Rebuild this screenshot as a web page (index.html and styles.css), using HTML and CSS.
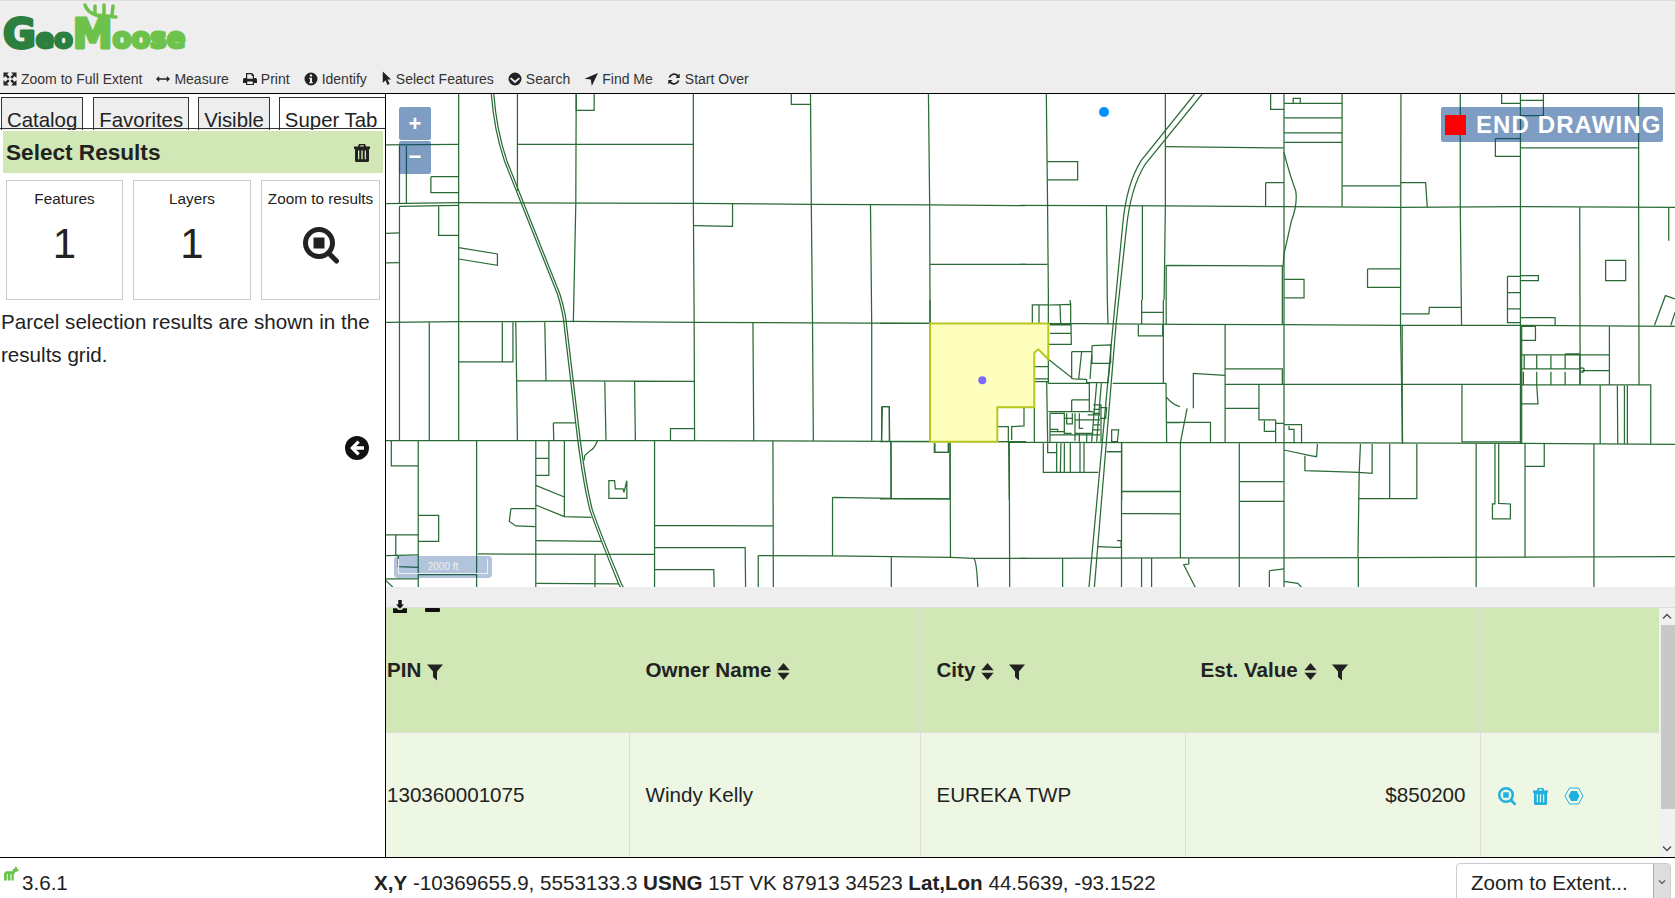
FILE: index.html
```html
<!DOCTYPE html>
<html lang="en">
<head>
<meta charset="utf-8">
<title>GeoMoose</title>
<link rel="stylesheet" href="styles.css">
</head>
<body>
<svg class="defs" width="0" height="0" aria-hidden="true">
  <symbol id="i-full" viewBox="0 0 14 14"><path d="M.5.5h5.4L.5 5.9zM13.5.5v5.4L8.1.5zM.5 13.5V8.1l5.4 5.4zM13.5 13.5H8.1l5.4-5.4z"/><path d="M3 3l2.8 2.8M11 3L8.2 5.8M3 11l2.8-2.8M11 11L8.2 8.2" stroke="currentColor" stroke-width="2.4"/></symbol>
  <symbol id="i-measure" viewBox="0 0 14 14"><path d="M0 7l3.2-3v2.2h7.6V4L14 7l-3.2 3V7.8H3.2V10z"/></symbol>
  <symbol id="i-print" viewBox="0 0 14 14"><path fill-rule="evenodd" d="M3 1h6l2 2v3h1.500A1.500 1.500 0 0 1 14 7.500V11h-3v2H3v-2H0V7.500A1.500 1.500 0 0 1 1.500 6H3zM4.200 2.200v4.500h5.600V4H8.500V2.200zM4.200 9.500v2.400h5.600V9.500z"/></symbol>
  <symbol id="i-info" viewBox="0 0 14 14"><path fill-rule="evenodd" d="M7 .5a6.500 6.500 0 1 1 0 13a6.500 6.500 0 0 1 0-13zM5.900 2.500v2h2.200v-2zM5.200 5.700v1.200h.8v3H5.200v1.300h3.600V9.900H8V5.700z"/></symbol>
  <symbol id="i-pointer" viewBox="0 0 10 16"><path d="M1 .5v12.200l3-2.800 2 5 2.300-1-2.100-4.800h3.800z"/></symbol>
  <symbol id="i-chev" viewBox="0 0 14 14"><path fill-rule="evenodd" d="M7 .5a6.500 6.500 0 1 1 0 13a6.500 6.500 0 0 1 0-13zM3.200 5.500L2 6.800 7 11.300l5-4.500-1.200-1.300L7 8.700z"/></symbol>
  <symbol id="i-locate" viewBox="0 0 14 14"><path d="M14 1L7.800 14 6.800 7.600 .5 6.700z"/></symbol>
  <symbol id="i-refresh" viewBox="0 0 14 14"><path d="M1.500 5.500A5.800 5.800 0 0 1 11.300 3l1.400-1.400V6H8.400L10 4.400A3.800 3.800 0 0 0 3.500 5.500zM12.500 8.500A5.800 5.800 0 0 1 2.700 11L1.300 12.400V8h4.300L4 9.600a3.800 3.800 0 0 0 6.500-1.100z"/></symbol>
  <symbol id="i-trash" viewBox="0 0 16 18"><path fill-rule="evenodd" d="M5 0h6l1.100 2.500H16V5h-1v11.500a1.500 1.500 0 0 1-1.500 1.500h-11A1.500 1.500 0 0 1 1 16.500V5H0V2.500h3.900zM6.500 1.200L6.100 2.500h3.800l-.4-1.300zM4 6.500v8.700h1.300V6.500zM7.300 6.500v8.700h1.400V6.500zM10.700 6.500v8.700H12V6.500z"/></symbol>
  <symbol id="i-zoom" viewBox="0 0 36 38"><circle cx="16" cy="16" r="13.500" fill="none" stroke="currentColor" stroke-width="5"/><rect x="10.500" y="10.500" width="11" height="11"/><path d="M25.500 26l8 8" fill="none" stroke="currentColor" stroke-width="5" stroke-linecap="round"/></symbol>
  <symbol id="i-sort" viewBox="0 0 13 18"><path d="M6.500 0L13 7.600H0zM0 10.400h13L6.500 18z"/></symbol>
  <symbol id="i-filter" viewBox="0 0 16 16"><path d="M0 0h16L10 7v9L6 12.500V7z"/></symbol>
  <symbol id="i-down" viewBox="0 0 14 13"><path d="M5.300 0h3.400v4.500H11L7 8.800 3 4.500h2.300zM0 8.200h3.500L5.500 10h3L10.500 8.200H14V13H0z"/></symbol>
  <symbol id="i-hex" viewBox="0 0 20 18"><path d="M5.500 1h9L19 9l-4.500 8h-9L1 9z" fill="none" stroke="currentColor" stroke-width="1"/><path d="M7.200 4h5.600L15.500 9l-2.700 5H7.200L4.500 9z"/></symbol>
  <symbol id="i-back" viewBox="0 0 24 24"><path fill-rule="evenodd" d="M12 0a12 12 0 1 1 0 24a12 12 0 0 1 0-24zM12.500 4.500L5 12l7.500 7.500 2.300-2.300-3.600-3.500H19v-3.400h-7.800l3.600-3.500z"/></symbol>
  <symbol id="i-moose" viewBox="0 0 16 15"><path d="M0 7h3v8H0zM4 7h3v8H4zM8 7h2.500v8H8zM1 6l1-1 7 0 1-3 1 1 1-3 1 1 1-1v3l2 0-1 2-3 1-1 2H1z"/></symbol>
</svg>

<header class="top">
  <div class="logo">
    <svg class="logo-art" viewBox="0 0 190 62" role="img" aria-label="GeoMoose logo">
      <path class="antler" d="M85 4Q87 11 96 14L116 16M95 5V13M104 4V15M113 5L112 15M98 15L104 20"/>
      <text class="logo-word" x="3" y="47"><tspan class="lg-g">G</tspan><tspan class="lg-eo">eo</tspan><tspan class="lg-m">M</tspan><tspan class="lg-oose">oose</tspan></text>
    </svg>
  </div>
  <nav class="toolbar">
    <a class="tool"><svg class="ic"><use href="#i-full"/></svg>Zoom to Full Extent</a>
    <a class="tool"><svg class="ic"><use href="#i-measure"/></svg>Measure</a>
    <a class="tool"><svg class="ic"><use href="#i-print"/></svg>Print</a>
    <a class="tool"><svg class="ic"><use href="#i-info"/></svg>Identify</a>
    <a class="tool"><svg class="ic ic-narrow"><use href="#i-pointer"/></svg>Select Features</a>
    <a class="tool"><svg class="ic"><use href="#i-chev"/></svg>Search</a>
    <a class="tool"><svg class="ic"><use href="#i-locate"/></svg>Find Me</a>
    <a class="tool"><svg class="ic"><use href="#i-refresh"/></svg>Start Over</a>
  </nav>
</header>

<div class="workspace">
  <aside class="side">
    <div class="tabs">
      <div class="tab">Catalog</div>
      <div class="tab">Favorites</div>
      <div class="tab">Visible</div>
      <div class="tab tab-active">Super Tab</div>
    </div>
    <div class="results-head">
      <h2 class="results-title">Select Results</h2>
      <svg class="ic-head"><use href="#i-trash"/></svg>
    </div>
    <div class="cards">
      <div class="card"><div class="card-label">Features</div><div class="card-value">1</div></div>
      <div class="card"><div class="card-label">Layers</div><div class="card-value">1</div></div>
      <div class="card"><div class="card-label">Zoom to results</div><svg class="ic-card"><use href="#i-zoom"/></svg></div>
    </div>
    <p class="note">Parcel selection results are shown in the results grid.</p>
    <svg class="collapse"><use href="#i-back"/></svg>
  </aside>

  <main class="content">
    <section class="map">
      <svg class="parcels" viewBox="386 94 1289 493" aria-hidden="true">
        <g class="lines" transform="translate(386 94) scale(.40816 .33333)">
          <path d="M0 153L178 151M322 151H753M0 329L178 326 753 328 1042 331 1331 333 1568 335M0 685L178 683 460 682 755 685 1045 687 1332 688M0 1040H660L950 1041 1237 1042 1568 1043M225 1380L658 1381M912 1385L1094 1386 1383 1390 1440 1393Q1447 1400 1450 1481M1440 1393H1568M368 1340L528 1342M368 1468L570 1470"/>
          <path d="M178 0V1040M33 337V1040M33 155V329M50 155V327M106 685V1040M322 0V290M466 0L465 330 459 685M753 0V328L755 685 756 1040M1040 0L1042 331 1045 687 1047 1040M1329 0L1332 333 1333 688M1187 333L1190 687V1040M899 686L901 1040"/>
          <path d="M466 0V49H510V0M993 0V31H1040M110 248H178M110 248V296H178M33 337L178 334M0 418L33 417M0 507L33 506M129 335V424H178M178 461L273 480V514L178 495M753 395L849 397V330M1332 511H1568"/>
          <path d="M178 804H311V685M285 685V804M318 685L320 860M320 860L322 1040M389 685L392 860M320 860L755 862M536 862L539 1040M609 862L611 1040M410 987H465M410 987L411 1040M697 1040V1004H755M1216 938H1233L1234 1041M1216 938L1214 1040"/>
          <path d="M13 1040V1116H79M79 1040V1481M222 1040V1481M367 1040V1481M399 1040V1144H367M367 1093H399M437 1040V1268L503 1270M367 1174L437 1209M367 1233L437 1268M518 1040Q510 1065 500 1070L487 1085 485 1100M546 1160V1213H590V1160L583 1195 581 1185H562L560 1160ZM658 1040V1481M948 1041L949 1481M658 1294L948 1296M658 1360L880 1361 881 1481M658 1426L803 1427 804 1481M912 1385V1481M1237 1042L1238 1213M1094 1210L1238 1213 1382 1215M1094 1210V1386M1382 1043L1383 1390M1238 1390V1481M1527 1043L1528 1481"/>
          <path d="M306 1244H366M306 1244L302 1282 318 1296 366 1298M79 1264H129V1342H79M0 1323H79M24 1323V1385M0 1385L79 1383M30 1383V1418L79 1420M79 1442H222M0 1455H79M0 1460L18 1481M512 1380V1481M1345 1048V1075H1378V1048"/>
          <path d="M258 0Q265 110 290 200L345 370 420 600Q435 660 437 700L470 1040Q485 1180 500 1250Q520 1320 570 1470L575 1481M264 0Q271 110 296 200L351 370 426 600Q441 660 443 700L476 1040Q491 1180 506 1250Q526 1320 577 1470L582 1481"/>
        </g>
        <g class="lines" transform="translate(1020 94) scale(.41772 .33333)">
          <path d="M0 334L348 336 630 338 911 340 1197 338 1568 340M0 511H66M383 691L630 692 912 694 1197 694 1568 697M383 1046H630L1197 1048 1568 1051M0 1393L385 1392H630L1568 1388"/>
          <path d="M63 0L66 334 68 618M348 0V336L345 618M207 334L209 618M293 334V618M632 0V1481M771 0V338M912 0L911 694 916 1048M1054 0V338L1057 694M1198 0V1048M1481 0V340L1482 873M1340 340L1341 873"/>
          <path d="M600 0V46H632M632 28H771M654 28V13H671V28M632 72H771M632 117H771M632 145H771M348 158L632 162M632 175Q645 240 660 290Q665 330 650 380L632 480 630 515M350 514L630 516M350 514V690M628 516V692M588 266H632M588 266V336M771 276H911M911 266H971L975 340M65 203H138V258H65M633 556H680V612H633M832 525H912M832 525V580H912M913 660H979L980 640H1056M1402 499H1450V560H1402ZM1167 547H1198M1167 547V686H1198M1167 596H1198M1167 645H1198M1198 545H1241V560H1198M1198 671H1281V694M1519 694L1545 605 1568 615M1568 655L1558 694M1553 340V440M1153 0V28H1198M1253 0V65H1198M1198 19H1253M1138 134H1198M1138 134V187H1198M1198 162H1481"/>
          <path d="M491 692V1046M491 825H628V871M491 871L1197 871M572 871V978H612M491 943H572M585 980V1012H612M612 978V1046M612 988H632M632 992H674V1048M644 996V1006H656V1048M400 943L384 1046M351 985H456V1046M415 943V838L491 844M915 694V1048M1058 873V1044H1197M1201 697V1048M1200 697H1234V739H1200M1200 783H1410M1411 697V873M1200 825H1342M1345 830H1410M1207 783V825M1237 783V825M1271 785V825M1305 780H1340V825M1305 780V825M1205 833V873M1237 833V873M1271 833V873M1305 833V873M1340 833V873M1200 873H1510V1050M1237 873L1240 930H1200M1389 873V1050M1430 875L1431 1050M1447 875V1050M1454 875V1050"/>
          <path d="M243 1046V1392M384 1046V1392M525 1048V1392M243 1192H384M243 1258L384 1260M525 1163H632M525 1222H632M632 1068L695 1085 710 1088 712 1050M682 1085V1130L812 1135 843 1138V1050M815 1050L812 1135 809 1390M809 1214H950V1050M885 1050V1214M1092 1050V1481M1209 1050V1390M1209 1117H1255V1050M1137 1050V1230H1131V1275H1174V1230L1146 1228V1050M1374 1050V1481M525 1392V1481M810 1392V1481M102 1393V1481M243 1392V1481M291 1392V1481M315 1392V1481M404 1393V1410L392 1412 420 1481M597 1430L632 1425M597 1430V1481M632 1462L665 1468 675 1481M185 1358L232 1360M232 1340H242V1360H232M208 1073H243"/>
          <path d="M418 0L290 200Q255 270 246 390L220 730 165 1481M436 0L300 210Q265 280 255 400L230 690 178 1481"/>
        </g>
        <g class="lines" transform="translate(880 300) scale(.33333)">
          <path d="M150 0V70M0 70H150M505 70L900 73M505 0V70M682 0L684 72M785 0V72M850 0V72M457 70V15H505M477 15V70M540 15L542 70M505 15L572 13V70M570 0L572 13M510 75H573L574 135M510 100H573M505 133H574M505 178V250M505 70V178M575 155H636M575 155V237M605 155L596 237M636 137L692 135V190M636 137V190H692M636 155L630 237M505 178L580 237 620 238M620 238V248H684L690 190M463 200H505M463 237H505M463 245H505M500 245L503 425M505 250H628V335M505 335H640M575 300H628M575 300V335M463 322V425M432 322V378L395 380V420M352 380H385V425M510 340V425M510 340H553V400H575M560 340V372H577V340M553 355H577M585 340V422M598 340V385H610M585 360H640M510 395H555M510 388H533V395M623 345H660M640 315H663V425M640 328H660M638 340H660M640 360H660M640 375H660M640 390H660M640 405H660M660 323H680L677 355H660M650 250L635 425M664 250L650 425M695 390H716L712 425H695ZM775 72V108H848V72M785 37H850M850 72V250M698 250H858L860 427M860 292Q875 312 900 320M860 368H900M385 427L900 428M490 427V517H655M503 427V458H530M530 427V517M543 427L541 517M553 427V517M571 427V517M600 427V517M612 427V517M680 455H725M725 428V600M725 575H900M386 427L388 600M210 425V597H0M33 425V597M163 430V457H205V430M5 320H28V425M5 320V425M0 425H150M352 425H385M585 400H640M510 405H640M598 400V425M620 400V425"/>
        </g>
        <path class="selected" d="M930 323.500H1048.300V359.300L1038.300 349.300 1034.300 352.700V407.300H997.300V441.700H930Z"/>
        <circle class="dot-sel" cx="982.300" cy="380.300" r="4"/>
        <circle class="dot-me" cx="1104" cy="112" r="5"/>
        <circle class="lines" cx="1582" cy="370" r="2.200"/>
      </svg>
      <div class="zoom-ctl">
        <button class="zoom-btn">+</button>
        <button class="zoom-btn">−</button>
      </div>
      <div class="end-draw"><span class="end-square"></span>END DRAWING</div>
      <div class="scale"><div class="scale-inner">2000 ft</div></div>
    </section>

    <div class="grid-strip">
      <svg class="ic-down"><use href="#i-down"/></svg>
      <span class="bar-minus"></span>
    </div>

    <section class="grid">
      <table class="results">
        <colgroup>
          <col class="c1"><col class="c2"><col class="c3"><col class="c4"><col class="c5">
        </colgroup>
        <thead>
          <tr>
            <th class="first">PIN <svg class="ic-filter"><use href="#i-filter"/></svg></th>
            <th class="wide">Owner Name <svg class="ic-sort"><use href="#i-sort"/></svg></th>
            <th class="wide">City <svg class="ic-sort"><use href="#i-sort"/></svg><svg class="ic-filter spaced"><use href="#i-filter"/></svg></th>
            <th>Est. Value <svg class="ic-sort"><use href="#i-sort"/></svg><svg class="ic-filter spaced"><use href="#i-filter"/></svg></th>
            <th></th>
          </tr>
        </thead>
        <tbody>
          <tr>
            <td class="first">130360001075</td>
            <td class="wide">Windy Kelly</td>
            <td class="wide">EUREKA TWP</td>
            <td class="money">$850200</td>
            <td class="actions">
              <svg class="act act-zoom"><use href="#i-zoom"/></svg>
              <svg class="act act-trash"><use href="#i-trash"/></svg>
              <svg class="act act-hex"><use href="#i-hex"/></svg>
            </td>
          </tr>
        </tbody>
      </table>
      <div class="scrollbar">
        <svg class="sb-arrow" viewBox="0 0 16 16"><path d="M4 10l4-4 4 4"/></svg>
        <div class="sb-track"><div class="sb-thumb"></div></div>
        <svg class="sb-arrow" viewBox="0 0 16 16"><path d="M4 6l4 4 4-4"/></svg>
      </div>
    </section>
  </main>
</div>

<footer class="foot">
  <div class="version"><svg class="ic-moose"><use href="#i-moose"/></svg><span>3.6.1</span></div>
  <div class="coords"><b>X,Y</b> -10369655.9, 5553133.3 <b>USNG</b> 15T VK 87913 34523 <b>Lat,Lon</b> 44.5639, -93.1522</div>
  <div class="extent">
    <span class="extent-label">Zoom to Extent...</span>
    <span class="extent-btn"><svg viewBox="0 0 12 12"><path d="M3 4.500l3 3 3-3"/></svg></span>
  </div>
</footer>
</body>
</html>
```

FILE: styles.css
```css
* { box-sizing: border-box; }
html, body { margin: 0; height: 100%; }
body {
  display: flex;
  flex-direction: column;
  height: 898px;
  overflow: hidden;
  font-family: "Liberation Sans", Arial, sans-serif;
  font-size: 20.600px;
  color: #222;
  background: #fff;
}
.defs { position: absolute; }

/* header */
.top {
  flex: 0 0 94px;
  background: #eee;
  border-top: 1px solid #ddd;
  border-bottom: 1px solid #000;
  display: flex;
  flex-direction: column;
}
.logo { height: 65px; }
.logo-art { display: block; width: 190px; height: 62px; }
.antler { fill: none; stroke: #6cc24a; stroke-width: 3.500px; stroke-linecap: round; }
.logo-word {
  font-family: "DejaVu Sans", sans-serif;
  font-weight: 700;
  stroke-width: 2.800px;
  stroke-linejoin: round;
}
.lg-g { font-size: 40px; fill: #2b7f3f; stroke: #2b7f3f; }
.lg-eo { font-size: 27px; fill: #2b7f3f; stroke: #2b7f3f; }
.lg-m { font-size: 40px; fill: #6cc24a; stroke: #6cc24a; }
.lg-oose { font-size: 27.500px; fill: #6cc24a; stroke: #6cc24a; }
.toolbar {
  height: 25px;
  display: flex;
  align-items: center;
  gap: 14px;
  padding-left: 3px;
  font-size: 14px;
  color: #333;
}
.tool { display: inline-flex; align-items: center; gap: 4px; white-space: nowrap; }
.ic { width: 14px; height: 14px; fill: #222; color: #222; flex: none; }
.ic-narrow { width: 11px; height: 15px; }

/* workspace */
.workspace { flex: 1 1 auto; display: flex; min-height: 0; }
.side {
  flex: 0 0 386px;
  width: 386px;
  min-width: 0;
  position: relative;
  border-right: 1px solid #000;
  background: #fff;
}
.tabs {
  height: 36px;
  padding-top: 3px;
  display: flex;
  overflow: hidden;
  position: relative;
  background: #fff;
}
.tabs::after {
  content: "";
  position: absolute;
  left: 0; right: 0; top: 34px;
  border-top: 1px solid #333;
}
.tab {
  flex: none;
  height: 40px;
  margin-left: 10px;
  padding: 10px 5px 0 5px;
  background: #eee;
  border: 1px solid #333;
  font-size: 20.400px;
  line-height: 24px;
  white-space: nowrap;
}
.tab:first-child { margin-left: 1px; }
.tab:nth-child(3) { margin-left: 9px; }
.tab-active { background: #fff; flex: 1 1 0; min-width: 0; overflow: hidden; margin-left: 9px; border-right: 0; }
.results-head {
  margin: 1px 2px 0 3px;
  height: 42px;
  background: #d1e7b5;
  display: flex;
  align-items: center;
  justify-content: space-between;
  padding: 1px 13px 0 3px;
}
.results-title { margin: 0; font-size: 22.600px; font-weight: 700; }
.ic-head { width: 16px; height: 18px; fill: #222; }
.cards {
  display: grid;
  grid-template-columns: 117px 118px 119px;
  padding: 7px 0 0 6px;
  column-gap: 10px;
}
.card {
  height: 120px;
  border: 1px solid #ccc;
  text-align: center;
  padding-top: 8px;
  font-size: 15.300px;
}
.card-label { line-height: 20px; }
.card-value { font-size: 42px; line-height: 48px; margin-top: 11px; }
.ic-card { width: 36px; height: 38px; margin-top: 18px; fill: #222; color: #222; }
.note { margin: 5px 10px 0 1px; line-height: 33px; }
.collapse { position: absolute; left: 345px; top: 342px; width: 24px; height: 24px; fill: #111; }

/* main column */
.content { flex: 1 1 auto; min-width: 0; display: flex; flex-direction: column; }
.map { flex: 0 0 493px; position: relative; overflow: hidden; background: #fff; }
.parcels { display: block; width: 1289px; height: 493px; }
.lines path, circle.lines {
  fill: none;
  stroke: #2a6b35;
  stroke-width: 1.250px;
  vector-effect: non-scaling-stroke;
}
.selected { fill: #ffffbd; stroke: #b5c81e; stroke-width: 2px; }
.dot-sel { fill: #7b68ff; }
.dot-me { fill: #0090ff; }
.zoom-ctl {
  position: absolute; left: 13px; top: 13px;
  display: flex; flex-direction: column; gap: 1px;
}
.zoom-btn {
  width: 32px; height: 33px;
  padding: 0; margin: 0;
  border: 0;
  border-radius: 2px;
  background: rgba(0, 60, 136, .5);
  color: #fff;
  font: 700 22px/32px "Liberation Sans", Arial, sans-serif;
}
.zoom-btn:last-child { padding-bottom: 4px; }
.end-draw {
  position: absolute; left: 1055px; top: 13px;
  width: 222px; height: 35px;
  display: flex; align-items: center;
  padding-left: 4px;
  border-radius: 2px;
  background: rgba(0, 60, 136, .5);
  color: #fff;
  font-size: 24px;
  font-weight: 700;
  letter-spacing: 1.100px;
  white-space: nowrap;
}
.end-square { width: 21px; height: 20px; margin-right: 10px; background: #f00; }
.scale {
  position: absolute; left: 8px; top: 462px;
  width: 98px; height: 22px;
  padding: 3px 4px;
  border-radius: 4px;
  background: rgba(0, 60, 136, .3);
}
.scale-inner {
  height: 15px;
  padding-top: 2px;
  border: 1px solid #eee;
  border-top: 0;
  color: #eee;
  font-size: 10px;
  line-height: 12px;
  text-align: center;
}
.grid-strip {
  flex: 0 0 21px;
  position: relative;
  background: #eee;
  border-bottom: 1px solid #ddd;
}
.ic-down { position: absolute; left: 7px; top: 13px; width: 14px; height: 13px; fill: #111; z-index: 1; }
.bar-minus {
  position: absolute; left: 39px; top: 21px;
  width: 15px; height: 4px;
  border-radius: 1px;
  background: #111;
  z-index: 1;
}

/* results grid */
.grid { flex: 1 1 auto; display: flex; min-height: 0; }
.results {
  flex: 1 1 auto;
  width: 1273px;
  height: 249px;
  table-layout: fixed;
  border-collapse: collapse;
}
.c1 { width: 243px; }
.c2 { width: 291px; }
.c3 { width: 265px; }
.c4 { width: 295px; }
.c5 { width: 179px; }
.results th, .results td {
  padding: 0 15px;
  vertical-align: middle;
  text-align: left;
  border-left: 1px solid #ddd;
  white-space: nowrap;
}
.results th { height: 124px; background: #d1e7b5; font-weight: 700; border-bottom: 1px solid #ddd; }
.results td { height: 125px; background: #eef7e3; }
.results .first { padding-left: 1px; border-left: 0; }
.results .wide { padding-left: 16px; }
.results .money { text-align: right; padding-right: 14px; }
.ic-sort { width: 13px; height: 17px; fill: #222; vertical-align: -3px; }
.ic-filter { width: 16px; height: 17px; fill: #222; vertical-align: -4px; }
.ic-filter.spaced { margin-left: 15px; }
.actions { padding-left: 16px !important; }
.act { fill: #1fb0e0; color: #1fb0e0; vertical-align: middle; }
.act-zoom { width: 20px; height: 19px; }
.act-trash { width: 15px; height: 17px; margin-left: 11px; }
.act-hex { width: 20px; height: 18px; margin-left: 10px; }
.scrollbar { flex: 0 0 16px; display: flex; flex-direction: column; background: #f1f1f1; }
.sb-arrow { width: 16px; height: 17px; fill: none; stroke: #505050; stroke-width: 1.500px; flex: none; }
.sb-track { flex: 1 1 auto; }
.sb-thumb { margin-left: 2px; height: 184px; background: #c8c8c8; }

/* footer */
.foot {
  flex: 0 0 41px;
  border-top: 1px solid #000;
  background: #fff;
  display: flex;
  align-items: flex-start;
  overflow: hidden;
}
.version { flex: 0 0 374px; display: flex; align-items: flex-start; padding: 8px 0 0 4px; }
.ic-moose { width: 15px; height: 15px; fill: #6cc24a; flex: none; }
.version span { margin: 5px 0 0 3px; line-height: 24px; }
.coords { padding-top: 13px; line-height: 24px; white-space: nowrap; }
.extent {
  margin: 5px 4px 0 auto;
  width: 215px; height: 44px;
  border: 1px solid #ccc;
  border-radius: 4px;
  display: flex;
  justify-content: space-between;
  padding-left: 14px;
}
.extent-label { line-height: 38px; }
.extent-btn { width: 17px; background: #ddd; border-left: 1px solid #aaa; display: flex; justify-content: center; padding-top: 12px; }
.extent-btn svg { width: 12px; height: 12px; fill: none; stroke: #555; stroke-width: 1.200px; }
```
